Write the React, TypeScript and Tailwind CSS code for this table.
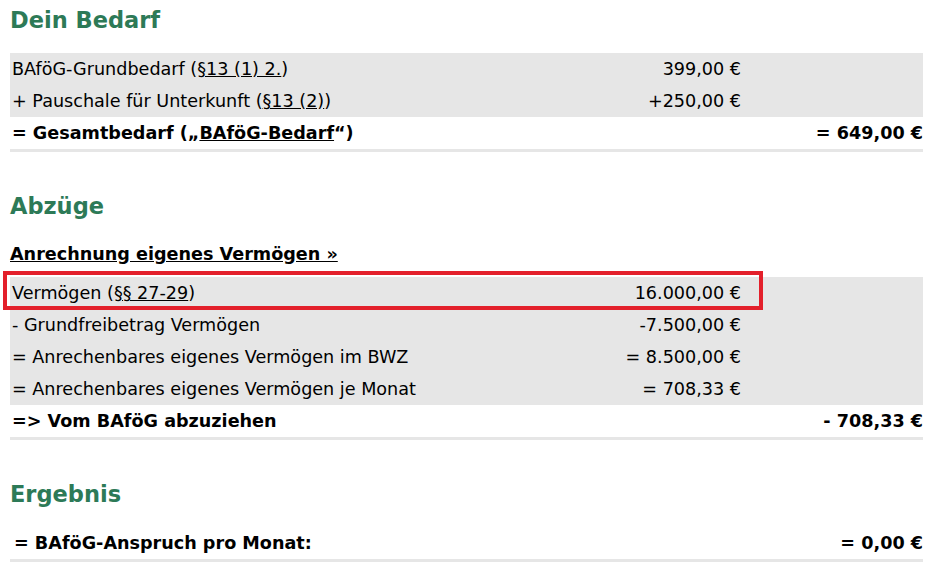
import type { ReactNode } from 'react'

type Row = {
  label: ReactNode
  value?: string
}

const font = { fontFamily: '"DejaVu Sans", Verdana, sans-serif' }

function Heading({ children, className = '' }: { children: ReactNode; className?: string }) {
  return (
    <h2 className={`text-[22.5px] leading-[28px] font-bold text-[#2d7a57] ${className}`}>{children}</h2>
  )
}

function GrayRows({ rows, highlightFirst = false }: { rows: Row[]; highlightFirst?: boolean }) {
  return (
    <div className="bg-[#e6e6e6]">
      {rows.map((row, idx) => (
        <div key={idx} className="relative grid grid-cols-[1fr_200px_182px] h-8 items-center">
          <div className="pl-[2px]">{row.label}</div>
          <div className="text-right">{row.value}</div>
          <div />
          {/* Markierung */}
          {highlightFirst && idx === 0 && (
            <div className="absolute -left-[7px] -top-[6px] w-[760px] h-[39px] border-[4px] border-[#e3202b] pointer-events-none" />
          )}
        </div>
      ))}
    </div>
  )
}

function TotalRow({ label, total }: { label: ReactNode; total: string }) {
  return (
    <div className="flex h-8 items-center justify-between font-bold border-b-[3px] border-[#e6e6e6] box-content">
      <div className="pl-[2px]">{label}</div>
      <div className="text-right">{total}</div>
    </div>
  )
}

export default function App() {
  const bedarf: Row[] = [
    {
      label: (
        <>
          BAföG-Grundbedarf (<span className="underline">§13 (1) 2.</span>)
        </>
      ),
      value: '399,00 €',
    },
    {
      label: (
        <>
          + Pauschale für Unterkunft (<span className="underline">§13 (2)</span>)
        </>
      ),
      value: '+250,00 €',
    },
  ]

  const vermoegen: Row[] = [
    {
      label: (
        <>
          Vermögen (<span className="underline">§§ 27-29</span>)
        </>
      ),
      value: '16.000,00 €',
    },
    { label: '- Grundfreibetrag Vermögen', value: '-7.500,00 €' },
    { label: '= Anrechenbares eigenes Vermögen im BWZ', value: '= 8.500,00 €' },
    { label: '= Anrechenbares eigenes Vermögen je Monat', value: '= 708,33 €' },
  ]

  return (
    <div className="w-[933px] h-[572px] bg-white text-black text-[17.6px] px-[10px] overflow-hidden" style={font}>
      <Heading className="pt-[6px]">Dein Bedarf</Heading>
      <div className="mt-[19px]">
        <GrayRows rows={bedarf} />
        <TotalRow
          label={
            <>
              = Gesamtbedarf („<span className="underline">BAföG-Bedarf</span>“)
            </>
          }
          total="= 649,00 €"
        />
      </div>

      <Heading className="mt-[40px]">Abzüge</Heading>
      <div className="mt-[24px] font-bold underline leading-[20px]">Anrechnung eigenes Vermögen »</div>
      <div className="mt-[13px]">
        <GrayRows rows={vermoegen} highlightFirst />
        <TotalRow label="=> Vom BAföG abzuziehen" total="- 708,33 €" />
      </div>

      <Heading className="mt-[40px]">Ergebnis</Heading>
      <div className="mt-[19px]">
        <TotalRow label={<span className="pl-[2px]">= BAföG-Anspruch pro Monat:</span>} total="= 0,00 €" />
      </div>
    </div>
  )
}
